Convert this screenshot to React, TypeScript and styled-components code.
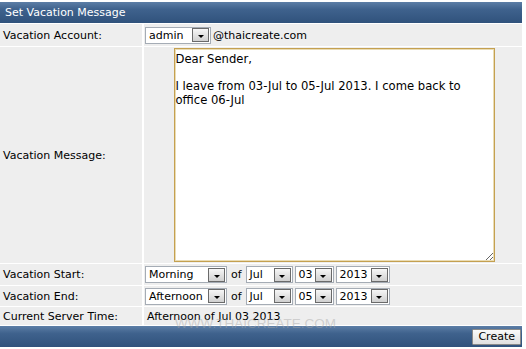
import React from "react";
import styled, { createGlobalStyle } from "styled-components";

const Global = createGlobalStyle`
  html, body { margin: 0; padding: 0; background: #ffffff; }
  body { font-family: "DejaVu Sans", Verdana, sans-serif; font-size: 11px; color: #000; }
`;

const Form = styled.div`
  position: relative;
  width: 522px;
  margin-top: 2px;
  display: grid;
  grid-template-columns: 142px 1fr;
  column-gap: 2px;
  row-gap: 1px;
  background: #ffffff;
`;

const Bar = styled.div<{ $align?: string }>`
  grid-column: 1 / -1;
  height: 21px;
  display: flex;
  align-items: center;
  justify-content: ${(p) => p.$align || "flex-start"};
  padding: 0 1px 0 5px;
  background: linear-gradient(#5c7ea6 0%, #3f628d 35%, #30527c 100%);
  color: #ffffff;
  font-size: 11px;
`;

const Label = styled.div<{ $h: number }>`
  height: ${(p) => p.$h}px;
  display: flex;
  align-items: center;
  padding-left: 3px;
  background: #eeeeee;
  font-size: 11px;
`;

const Value = styled.div<{ $h: number; $center?: boolean }>`
  height: ${(p) => p.$h}px;
  display: flex;
  align-items: center;
  justify-content: ${(p) => (p.$center ? "center" : "flex-start")};
  gap: 2px;
  padding-left: ${(p) => (p.$center ? "0" : "1px")};
  background: #eeeeee;
  font-size: 11px;
`;

const SelectBox = styled.div<{ $w: number }>`
  box-sizing: border-box;
  width: ${(p) => p.$w}px;
  height: 17px;
  display: flex;
  align-items: center;
  justify-content: space-between;
  background: #ffffff;
  border: 1px solid #a5acb5;
  padding: 1px;
`;

const SelectText = styled.span`
  padding-left: 2px;
  font-size: 11px;
  white-space: nowrap;
`;

const DropButton = styled.span`
  box-sizing: border-box;
  flex: none;
  width: 17px;
  height: 14px;
  display: flex;
  align-items: flex-end;
  justify-content: center;
  padding-bottom: 3px;
  border: 1px solid #6a6a6a;
  background: linear-gradient(#f6f6f6, #d0d0d0);
`;

const Arrow = styled.span`
  width: 0;
  height: 0;
  border-left: 3px solid transparent;
  border-right: 3px solid transparent;
  border-top: 3px solid #000;
`;

const Message = styled.textarea`
  box-sizing: border-box;
  width: 321px;
  height: 214px;
  margin-left: 2px;
  padding: 4px 1px;
  border: 1px solid #c4a050;
  box-shadow: inset 0 0 0 1px #eadcb4;
  outline: none;
  resize: both;
  font-family: "DejaVu Sans", Verdana, sans-serif;
  font-size: 11.6px;
  line-height: 13.5px;
  color: #000;
  background: #ffffff;
  overflow: hidden;
`;

const Of = styled.span`
  padding: 0 2px;
`;

const CreateButton = styled.button`
  height: 16px;
  padding: 0 5px;
  border: 1px solid #8a8a8a;
  border-radius: 1px;
  background: linear-gradient(#fafafa, #e0e0e0);
  font-family: "DejaVu Sans", Verdana, sans-serif;
  font-size: 11px;
  line-height: 13px;
  color: #000;
`;

const Watermark = styled.div`
  position: absolute;
  left: 175px;
  top: 314px;
  font-family: "Liberation Sans", Arial, sans-serif;
  font-size: 13.5px;
  color: rgba(165, 165, 165, 0.45);
  pointer-events: none;
`;

function Select({ value, w }: { value: string; w: number }) {
  return (
    <SelectBox $w={w}>
      <SelectText>{value}</SelectText>
      <DropButton>
        <Arrow />
      </DropButton>
    </SelectBox>
  );
}

const msg =
  "Dear Sender,\n\nI leave from 03-Jul to 05-Jul 2013. I come back to\noffice 06-Jul";

export default function App() {
  return (
    <>
      <Global />
      <Form>
        <Bar>Set Vacation Message</Bar>

        <Label $h={22}>Vacation Account:</Label>
        <Value $h={22}>
          <Select value="admin" w={66} />
          <span>@thaicreate.com</span>
        </Value>

        <Label $h={216}>Vacation Message:</Label>
        <Value $h={216} $center>
          <Message wrap="off" defaultValue={msg} />
        </Value>

        <Label $h={21}>Vacation Start:</Label>
        <Value $h={21}>
          <Select value="Morning" w={82} />
          <Of>of</Of>
          <Select value="Jul" w={47} />
          <Select value="03" w={39} />
          <Select value="2013" w={54} />
        </Value>

        <Label $h={20}>Vacation End:</Label>
        <Value $h={20}>
          <Select value="Afternoon" w={82} />
          <Of>of</Of>
          <Select value="Jul" w={47} />
          <Select value="05" w={39} />
          <Select value="2013" w={54} />
        </Value>

        <Label $h={18}>Current Server Time:</Label>
        <Value $h={18}>
          <span style={{ paddingLeft: 2 }}>Afternoon of Jul 03 2013</span>
        </Value>

        <Bar $align="flex-end">
          <CreateButton>Create</CreateButton>
        </Bar>
        <Watermark>WWW.THAICREATE.COM</Watermark>
      </Form>
    </>
  );
}
